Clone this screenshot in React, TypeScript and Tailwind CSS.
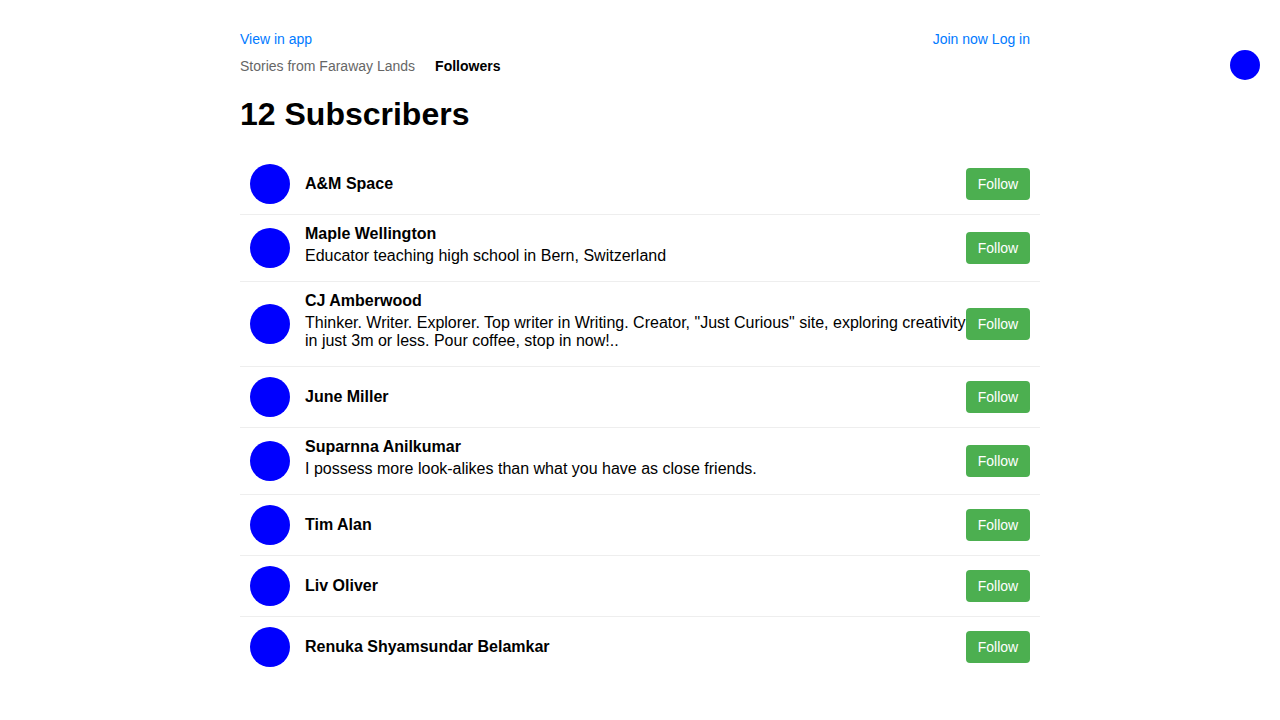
const subscribers = [
  { name: "A&M Space" },
  { name: "Maple Wellington", bio: "Educator teaching high school in Bern, Switzerland" },
  {
    name: "CJ Amberwood",
    bio: 'Thinker. Writer. Explorer. Top writer in Writing. Creator, "Just Curious" site, exploring creativity in just 3m or less. Pour coffee, stop in now!..',
  },
  { name: "June Miller" },
  { name: "Suparnna Anilkumar", bio: "I possess more look-alikes than what you have as close friends." },
  { name: "Tim Alan" },
  { name: "Liv Oliver" },
  { name: "Renuka Shyamsundar Belamkar" },
];

function SubscriberRow({ name, bio, last }: { name: string; bio?: string; last: boolean }) {
  return (
    <div
      className={`flex items-center py-[10px] pl-[10px] pr-[10px] ${
        last ? "" : "border-b border-[#eeeeee]"
      }`}
    >
      <div className="w-[40px] h-[40px] rounded-full bg-[#0000ff] shrink-0" />
      <div className={`flex-1 ml-[15px] ${bio ? "pb-[6px]" : ""}`}>
        <div className="text-[16px] leading-[18px] font-bold text-black">{name}</div>
        {bio && <div className="mt-[4px] text-[16px] leading-[18px] text-black">{bio}</div>}
      </div>
      <button className="w-[64px] h-[32px] rounded-[4px] bg-[#4caf50] text-white text-[14px] shrink-0">
        Follow
      </button>
    </div>
  );
}

export default function App() {
  return (
    <div className="min-h-screen bg-white font-['Liberation_Sans',Arial,sans-serif]">
      <div className="fixed top-[50px] right-[20px] w-[30px] h-[30px] rounded-full bg-[#0000ff]" />

      <div className="w-[800px] mx-auto pt-[31px]">
        <div className="flex justify-between pr-[10px] text-[14px] leading-[16px] text-[#007aff]">
          <a>View in app</a>
          <div>
            <a>Join now</a> <a>Log in</a>
          </div>
        </div>
        <div className="flex gap-[20px] mt-[11px] text-[14px] leading-[16px]">
          <span className="text-[#666666]">Stories from Faraway Lands</span>
          <span className="font-bold text-black">Followers</span>
        </div>

        <h1 className="text-[32px] leading-[37px] font-bold text-black mt-[22px] mb-[21px]">12 Subscribers</h1>

        <div>
          {subscribers.map((s, i) => (
            <SubscriberRow key={s.name} name={s.name} bio={s.bio} last={i === subscribers.length - 1} />
          ))}
        </div>
      </div>
    </div>
  );
}
